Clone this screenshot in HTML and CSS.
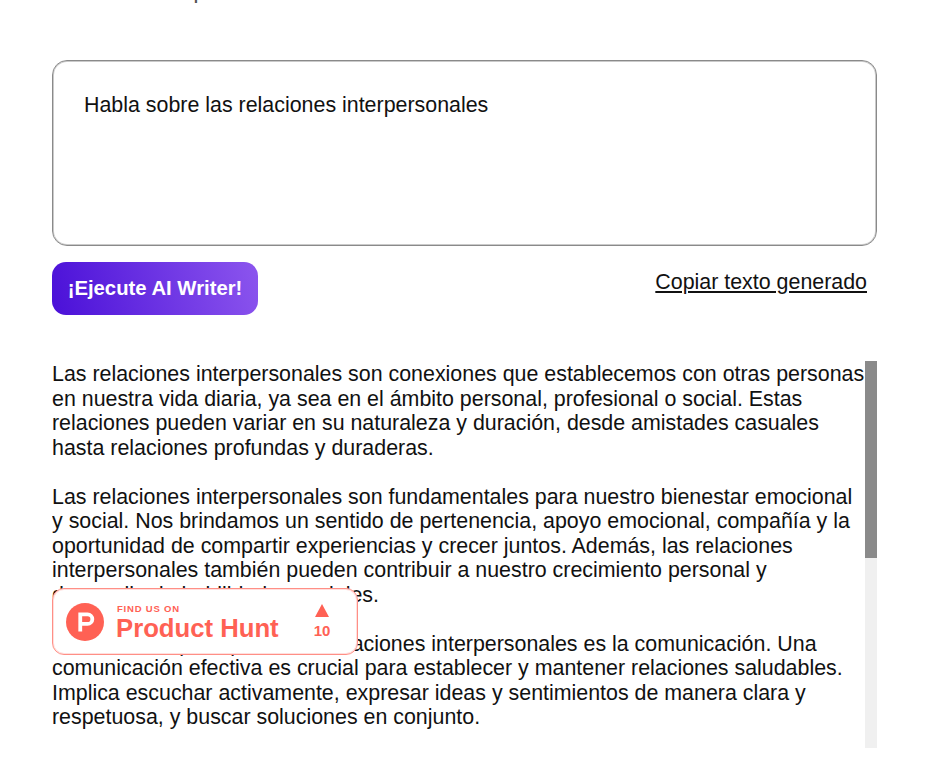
FILE: index.html
```html
<!DOCTYPE html>
<html lang="es">
<head>
<meta charset="utf-8">
<title>AI Writer</title>
<link rel="stylesheet" href="styles.css">
</head>
<body>
<main class="page">
  <div class="top-clip"><h2 class="top-title">español</h2></div>
  <div class="prompt">Habla sobre las relaciones interpersonales</div>
  <div class="actions">
    <button class="run" type="button">¡Ejecute AI Writer!</button>
    <a class="copy" href="#">Copiar texto generado</a>
  </div>
  <div class="output-wrap">
    <div class="output">
      <p>Las relaciones interpersonales son conexiones que establecemos con otras personas en nuestra vida diaria, ya sea en el ámbito personal, profesional o social. Estas relaciones pueden variar en su naturaleza y duración, desde amistades casuales hasta relaciones profundas y duraderas.</p>
      <p>Las relaciones interpersonales son fundamentales para nuestro bienestar emocional y social. Nos brindamos un sentido de pertenencia, apoyo emocional, compañía y la oportunidad de compartir experiencias y crecer juntos. Además, las relaciones interpersonales también pueden contribuir a nuestro crecimiento personal y desarrollo de habilidades sociales.</p>
      <p>Un elemento principal en las relaciones interpersonales es la comunicación. Una comunicación efectiva es crucial para establecer y mantener relaciones saludables. Implica escuchar activamente, expresar ideas y sentimientos de manera clara y respetuosa, y buscar soluciones en conjunto.</p>
      <p>Otro aspecto importante es la empatía, que nos permite comprender y compartir los sentimientos de los demás.</p>
    </div>
    <div class="scrollbar"><div class="thumb"></div></div>
  </div>
</main>
<a class="ph-badge" href="#">
  <svg class="ph-logo" viewBox="0 0 40 40" aria-hidden="true">
    <circle cx="20" cy="20" r="20" fill="#ff6154"/>
    <path fill="#fff" d="M22.7 20H17v-6h5.7a3 3 0 0 1 0 6zm0-10H13v20h4v-6h5.7a7 7 0 0 0 0-14z"/>
  </svg>
  <span class="ph-text">
    <span class="ph-find">FIND US ON</span>
    <span class="ph-name">Product Hunt</span>
  </span>
  <span class="ph-votes">
    <span class="ph-arrow"></span>
    <span class="ph-count">10</span>
  </span>
</a>
</body>
</html>
```
FILE: styles.css
```css
* { box-sizing: border-box; }
html, body { margin: 0; padding: 0; background: #fff; overflow: hidden; }
body {
  height: 768px;
  position: relative;
  font-family: "Liberation Sans", Arial, sans-serif;
  color: #111;
}
.page {
  width: 825px;
  margin-left: 52px;
  display: flex;
  flex-direction: column;
}
.top-clip {
  height: 60px;
  overflow: hidden;
}
.top-title {
  margin: -25px 0 0 0;
  padding-left: 116px;
  font-size: 24px;
  line-height: 30px;
  font-weight: 400;
  color: #555;
}
.prompt {
  height: 186px;
  border: 1px solid #8a8a8a;
  border-radius: 15px;
  box-shadow: inset 0 0 0 1px rgba(138, 138, 138, 0.45);
  padding: 32px 31px;
  font-size: 21.4px;
  line-height: 24px;
}
.actions {
  display: flex;
  justify-content: space-between;
  align-items: flex-start;
  margin-top: 16px;
  padding-right: 10px;
}
.run {
  width: 206px;
  height: 53px;
  border: 0;
  border-radius: 14px;
  background: linear-gradient(75deg, #4a10d8 0%, #8c55ee 100%);
  color: #fff;
  font: 700 20.3px/53px "Liberation Sans", Arial, sans-serif;
  padding: 0;
}
.copy {
  font-size: 21.4px;
  line-height: 24px;
  margin-top: 8px;
  color: #111;
  text-decoration: underline;
}
.output-wrap {
  position: relative;
  margin-top: 46px;
  height: 387px;
}
.output {
  height: 100%;
  overflow: hidden;
  padding: 1px 12px 0 0;
  font-size: 21.4px;
  line-height: 24.5px;
}
.output p { margin: 0 0 24.5px; }
.scrollbar {
  position: absolute;
  top: 0;
  right: 0;
  width: 12px;
  height: 100%;
  background: #f0f0f0;
}
.thumb {
  height: 197px;
  background: #8a8a8a;
}
.ph-badge {
  position: absolute;
  left: 52px;
  top: 588px;
  width: 306px;
  height: 67px;
  display: flex;
  align-items: center;
  padding-left: 13px;
  background: #fff;
  border: 1px solid #ff8f86;
  border-radius: 12px;
  box-shadow: inset 0 0 0 1px rgba(255, 97, 84, 0.2);
  text-decoration: none;
  color: #ff6154;
}
.ph-logo { width: 38px; height: 38px; flex: none; }
.ph-text {
  display: flex;
  flex-direction: column;
  margin-left: 12px;
  width: 190px;
  padding-top: 4px;
}
.ph-find {
  font-size: 9.5px;
  line-height: 10px;
  font-weight: 700;
  letter-spacing: 0.8px;
  margin-left: 1px;
}
.ph-name {
  font-size: 25.7px;
  line-height: 29px;
  font-weight: 700;
}
.ph-votes {
  display: flex;
  flex-direction: column;
  align-items: center;
  width: 32px;
}
.ph-arrow {
  width: 0;
  height: 0;
  border-left: 7px solid transparent;
  border-right: 7px solid transparent;
  border-bottom: 13px solid #ff6154;
}
.ph-count {
  font-size: 15px;
  line-height: 16px;
  font-weight: 700;
  margin-top: 6px;
}
```
